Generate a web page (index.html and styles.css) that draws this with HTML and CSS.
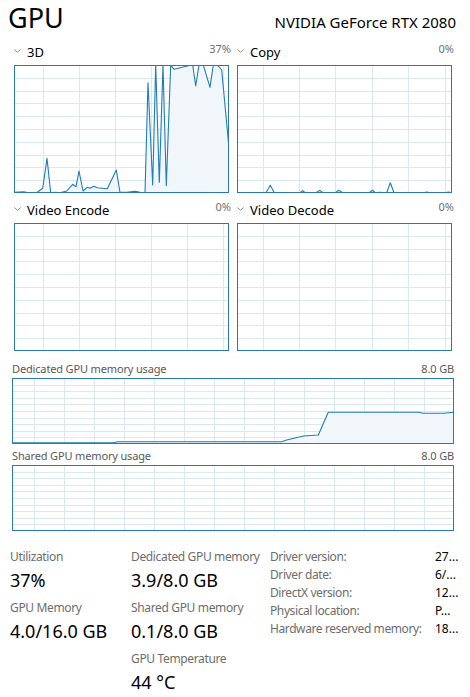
FILE: index.html
```html
<!DOCTYPE html>
<html lang="en">
<head>
<meta charset="utf-8">
<title>GPU</title>
<link rel="stylesheet" href="styles.css">
</head>
<body>
<div class="page">
  <header class="head">
    <h1 class="title">GPU</h1>
    <div class="model">NVIDIA GeForce RTX 2080</div>
  </header>

  <section class="engines">
    <div class="engine">
      <div class="elabel">
        <span class="ename"><svg class="chev" width="7" height="4" viewBox="0 0 7 4"><polyline points="0.5,0.5 3.5,3.3 6.5,0.5" fill="none" stroke="#8a8a8a" stroke-width="1"/></svg>3D</span>
        <span class="epct">37%</span>
      </div>
      <svg class="chart" width="215" height="128" viewBox="0 0 215 128">
        <path class="grid" d="M0 13.5H215M0 26.5H215M0 38.5H215M0 51.5H215M0 64.5H215M0 77.5H215M0 90.5H215M0 102.5H215M0 115.5H215M29.5 0V128M65.5 0V128M101.5 0V128M137.5 0V128M173.5 0V128M209.5 0V128"/>
        <polygon class="fill" points="0,127.3 9.3,126.7 12.7,127.3 22.7,127.7 28.7,123.3 33,93.3 36.7,127.7 41,127.3 46,127.7 52.7,126 58.7,119.3 62,121.7 65,106 69,126 73.3,122.3 76,123.3 80,121.3 83.3,122.7 93.3,123.7 102.3,105 106,127.3 112.7,127.3 121,126.3 126,127.3 131,127.7 134,17.7 138.7,120 141.7,0 145.3,117.3 149,0 152.3,120.7 156.7,0 160,4.3 174.3,0.7 178.7,0 181.7,21 185,0 189.3,0 196,22.3 199.3,0 203.3,0 207.7,5 214.7,80 214.7,128 0,128"/>
        <polyline class="line" points="0,127.3 9.3,126.7 12.7,127.3 22.7,127.7 28.7,123.3 33,93.3 36.7,127.7 41,127.3 46,127.7 52.7,126 58.7,119.3 62,121.7 65,106 69,126 73.3,122.3 76,123.3 80,121.3 83.3,122.7 93.3,123.7 102.3,105 106,127.3 112.7,127.3 121,126.3 126,127.3 131,127.7 134,17.7 138.7,120 141.7,0 145.3,117.3 149,0 152.3,120.7 156.7,0 160,4.3 174.3,0.7 178.7,0 181.7,21 185,0 189.3,0 196,22.3 199.3,0 203.3,0 207.7,5 214.7,80"/>
        <rect class="border" x="0.5" y="0.5" width="214" height="127"/>
      </svg>
    </div>

    <div class="engine">
      <div class="elabel">
        <span class="ename"><svg class="chev" width="7" height="4" viewBox="0 0 7 4"><polyline points="0.5,0.5 3.5,3.3 6.5,0.5" fill="none" stroke="#8a8a8a" stroke-width="1"/></svg>Copy</span>
        <span class="epct">0%</span>
      </div>
      <svg class="chart" width="215" height="128" viewBox="0 0 215 128">
        <path class="grid" d="M0 13.5H215M0 26.5H215M0 38.5H215M0 51.5H215M0 64.5H215M0 77.5H215M0 90.5H215M0 102.5H215M0 115.5H215M26.5 0V128M62.5 0V128M98.5 0V128M135.5 0V128M171.5 0V128M208.5 0V128"/>
        <polyline class="line" points="0,127.7 29,127.7 33.3,120.3 37.3,127.7 63,127.7 65.7,125.7 68.3,127.7 79,127.7 83,125.3 85.7,127.7 98.3,127.7 101.7,125.3 105.7,127.7 132.3,127.7 135.3,125.3 138.3,127.7 143,127.3 149.7,127.7 153.3,117.7 157,127.7 186.3,127.7 189.7,127 193,127.7 208,127.7 211.3,127 214.7,127.7"/>
        <rect class="border" x="0.5" y="0.5" width="214" height="127"/>
      </svg>
    </div>

    <div class="engine">
      <div class="elabel">
        <span class="ename"><svg class="chev" width="7" height="4" viewBox="0 0 7 4"><polyline points="0.5,0.5 3.5,3.3 6.5,0.5" fill="none" stroke="#8a8a8a" stroke-width="1"/></svg>Video Encode</span>
        <span class="epct">0%</span>
      </div>
      <svg class="chart" width="215" height="128" viewBox="0 0 215 128">
        <path class="grid" d="M0 13.5H215M0 26.5H215M0 38.5H215M0 51.5H215M0 64.5H215M0 77.5H215M0 90.5H215M0 102.5H215M0 115.5H215M29.5 0V128M65.5 0V128M101.5 0V128M137.5 0V128M173.5 0V128M209.5 0V128"/>
        <rect class="border" x="0.5" y="0.5" width="214" height="127"/>
      </svg>
    </div>

    <div class="engine">
      <div class="elabel">
        <span class="ename"><svg class="chev" width="7" height="4" viewBox="0 0 7 4"><polyline points="0.5,0.5 3.5,3.3 6.5,0.5" fill="none" stroke="#8a8a8a" stroke-width="1"/></svg>Video Decode</span>
        <span class="epct">0%</span>
      </div>
      <svg class="chart" width="215" height="128" viewBox="0 0 215 128">
        <path class="grid" d="M0 13.5H215M0 26.5H215M0 38.5H215M0 51.5H215M0 64.5H215M0 77.5H215M0 90.5H215M0 102.5H215M0 115.5H215M26.5 0V128M62.5 0V128M98.5 0V128M135.5 0V128M171.5 0V128M208.5 0V128"/>
        <rect class="border" x="0.5" y="0.5" width="214" height="127"/>
      </svg>
    </div>
  </section>

  <section class="memory">
    <div class="mlabel"><span>Dedicated GPU memory usage</span><span>8.0 GB</span></div>
    <svg class="mchart" width="442" height="66" viewBox="0 0 442 66">
      <path class="grid" d="M0 7.5H442M0 13.5H442M0 20.5H442M0 26.5H442M0 33.5H442M0 40.5H442M0 46.5H442M0 53.5H442M0 59.5H442M22.5 0V66M52.5 0V66M82.5 0V66M112.5 0V66M142.5 0V66M172.5 0V66M202.5 0V66M232.5 0V66M262.5 0V66M292.5 0V66M322.5 0V66M352.5 0V66M382.5 0V66M412.5 0V66"/>
      <polygon class="fill" points="0,64.7 101,64.7 106,63.7 269.7,63.7 274.7,62 291.3,58 306.3,57 316.3,34.3 406.3,34.3 411.3,35.3 431.3,35.3 442,34.3 442,66 0,66"/>
      <polyline class="line" points="0,64.7 101,64.7 106,63.7 269.7,63.7 274.7,62 291.3,58 306.3,57 316.3,34.3 406.3,34.3 411.3,35.3 431.3,35.3 442,34.3"/>
      <rect class="border" x="0.5" y="0.5" width="441" height="65"/>
    </svg>

    <div class="mlabel second"><span>Shared GPU memory usage</span><span>8.0 GB</span></div>
    <svg class="mchart" width="442" height="66" viewBox="0 0 442 66">
      <path class="grid" d="M0 7.5H442M0 13.5H442M0 20.5H442M0 26.5H442M0 33.5H442M0 40.5H442M0 46.5H442M0 53.5H442M0 59.5H442M22.5 0V66M52.5 0V66M82.5 0V66M112.5 0V66M142.5 0V66M172.5 0V66M202.5 0V66M232.5 0V66M262.5 0V66M292.5 0V66M322.5 0V66M352.5 0V66M382.5 0V66M412.5 0V66"/>
      <rect class="border" x="0.5" y="0.5" width="441" height="65"/>
    </svg>
  </section>

  <section class="stats">
    <div class="col">
      <div class="stat"><div class="slabel">Utilization</div><div class="svalue">37%</div></div>
      <div class="stat"><div class="slabel">GPU Memory</div><div class="svalue">4.0/16.0 GB</div></div>
    </div>
    <div class="col">
      <div class="stat"><div class="slabel">Dedicated GPU memory</div><div class="svalue">3.9/8.0 GB</div></div>
      <div class="stat"><div class="slabel">Shared GPU memory</div><div class="svalue">0.1/8.0 GB</div></div>
      <div class="stat"><div class="slabel">GPU Temperature</div><div class="svalue">44 °C</div></div>
    </div>
    <div class="info">
      <span class="ikey">Driver version:</span><span class="ival">27...</span>
      <span class="ikey">Driver date:</span><span class="ival">6/...</span>
      <span class="ikey">DirectX version:</span><span class="ival">12...</span>
      <span class="ikey">Physical location:</span><span class="ival">P...</span>
      <span class="ikey">Hardware reserved memory:</span><span class="ival">18...</span>
    </div>
  </section>
</div>
</body>
</html>
```

FILE: styles.css
```css
html, body {
  margin: 0;
  padding: 0;
  background: #ffffff;
}

body {
  font-family: "Noto Sans", "Open Sans", sans-serif;
  color: #000000;
}

.page {
  width: 470px;
  height: 697px;
  overflow: hidden;
}

.head {
  display: flex;
  justify-content: space-between;
  align-items: baseline;
  height: 42px;
  padding: 0 14px 0 8px;
}

.title {
  margin: 0;
  font-size: 27px;
  font-weight: 400;
  line-height: 36px;
}

.model {
  font-size: 15px;
}

.engines {
  display: grid;
  grid-template-columns: 215px 215px;
  column-gap: 8px;
  row-gap: 7px;
  padding-left: 14px;
}

.engine {
  display: flex;
  flex-direction: column;
}

.elabel {
  display: flex;
  justify-content: space-between;
  align-items: baseline;
  height: 20px;
  line-height: 14px;
  margin-right: -2px;
  margin-bottom: 3px;
}

.ename {
  font-size: 13px;
  display: flex;
  align-items: center;
  gap: 6px;
}

.chev {
  display: block;
  margin-top: -1px;
}

.epct {
  font-size: 11px;
  color: #707070;
}

.chart, .mchart {
  display: block;
}

.grid {
  stroke: #d9e8f3;
  stroke-width: 1;
  fill: none;
}

.fill {
  fill: #f1f6fb;
  stroke: none;
}

.line {
  fill: none;
  stroke: #1f7db8;
  stroke-width: 1.1;
  stroke-linejoin: round;
}

.border {
  fill: none;
  stroke: #2a79ab;
  stroke-width: 1;
}

.memory {
  padding: 9px 16px 0 12px;
}

.mlabel {
  display: flex;
  justify-content: space-between;
  font-size: 11px;
  letter-spacing: -0.15px;
  color: #595959;
  line-height: 17px;
  height: 17px;
  margin-bottom: 1px;
}

.mlabel.second {
  margin-top: 3px;
}

.stats {
  display: grid;
  grid-template-columns: 121px 139px 1fr;
  padding: 17px 0 0 10px;
}

.stat {
  display: flex;
  flex-direction: column;
  margin-bottom: 4px;
}

.slabel {
  font-size: 12px;
  letter-spacing: -0.35px;
  color: #6d6d6d;
  line-height: 17px;
  white-space: nowrap;
}

.svalue {
  font-size: 18px;
  line-height: 30px;
  white-space: nowrap;
}

.info {
  display: grid;
  grid-template-columns: 165px 1fr;
  grid-auto-rows: 18px;
  font-size: 12px;
  line-height: 18px;
  letter-spacing: -0.4px;
  margin-top: -0.5px;
}

.ikey {
  color: #6d6d6d;
  white-space: nowrap;
}

.ival {
  color: #000000;
  letter-spacing: 0;
}
```
